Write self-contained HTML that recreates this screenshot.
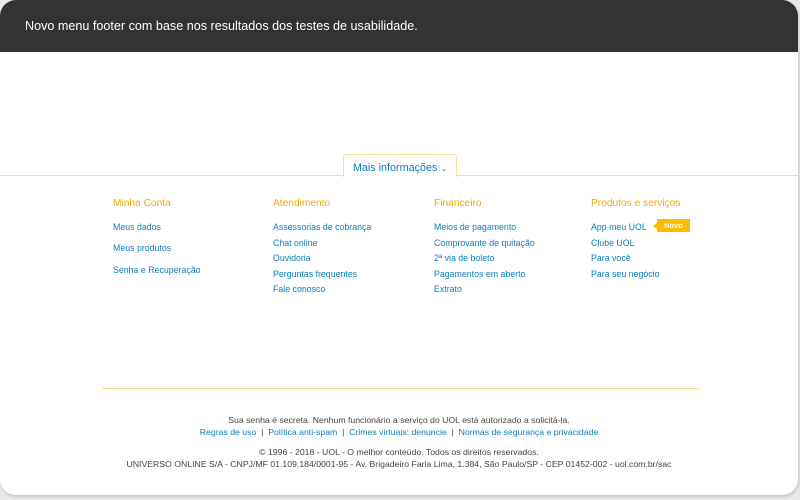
<!DOCTYPE html>
<html><head><meta charset="utf-8"><style>
*{margin:0;padding:0;box-sizing:border-box}
body{width:800px;height:500px;background:#e9e9e9;font-family:"Liberation Sans",sans-serif;position:relative;overflow:hidden}
.card{position:absolute;left:0;top:0;width:798px;height:495px;background:#fff;border-radius:16px;overflow:hidden;box-shadow:1px 2px 3px rgba(0,0,0,.15)}
.hdr{height:52px;background:#333;color:#fff;font-size:12.6px;padding-left:25px;line-height:52px}
.line{position:absolute;left:0;right:0;top:175px;height:1px;background:#f7dd8f}
.tab{position:absolute;left:343px;top:154px;width:114px;height:23px;border:1px solid #f7dd8f;border-bottom:none;border-radius:4px 4px 0 0;background:#fff;color:#0a7fbf;font-size:10.8px;text-align:center;line-height:26px}
.col{position:absolute;top:198px;font-size:8.8px;color:#0a7fbf}
.col h4{color:#f5a800;font-weight:normal;font-size:10.2px;margin-bottom:11px}
.col div{height:15.6px;line-height:15px}
.c1 div{height:21.3px}
.badge{position:absolute;left:657px;top:219px;width:33px;height:13px;background:#fbbc05;color:#fff;font-size:7.5px;text-align:center;line-height:13px;font-weight:bold}
.badge:before{content:"";position:absolute;left:-4px;top:3.5px;border:3px solid transparent;border-right:4px solid #fbbc05;border-left:none}
.hr2{position:absolute;left:102px;width:597px;top:388px;height:1px;background:#f7dd8f}
.ft{position:absolute;left:0;right:0;text-align:center;font-size:8.7px;color:#444}
.ft a{color:#0a7fbf;text-decoration:none}
</style></head><body>
<div class="card">
<div class="hdr">Novo menu footer com base nos resultados dos testes de usabilidade.</div>
<div class="line"></div>
<div class="tab">Mais informações <span style="font-size:8px">&#8964;</span></div>
<div class="col c1" style="left:113px"><h4>Minha Conta</h4><div>Meus dados</div><div>Meus produtos</div><div>Senha e Recuperação</div></div>
<div class="col" style="left:273px"><h4>Atendimento</h4><div>Assessorias de cobrança</div><div>Chat online</div><div>Ouvidoria</div><div>Perguntas frequentes</div><div>Fale conosco</div></div>
<div class="col" style="left:434px"><h4>Financeiro</h4><div>Meios de pagamento</div><div>Comprovante de quitação</div><div>2ª via de boleto</div><div>Pagamentos em aberto</div><div>Extrato</div></div>
<div class="col" style="left:591px"><h4>Produtos e serviços</h4><div>App meu UOL</div><div>Clube UOL</div><div>Para você</div><div>Para seu negócio</div></div>
<div class="badge">Novo</div>
<div class="hr2"></div>
<div class="ft" style="top:415px">Sua senha é secreta. Nenhum funcionário a serviço do UOL está autorizado a solicitá-la.</div>
<div class="ft" style="top:427px"><a>Regras de uso</a> &nbsp;|&nbsp; <a>Política anti-spam</a> &nbsp;|&nbsp; <a>Crimes virtuais: denuncie</a> &nbsp;|&nbsp; <a>Normas de segurança e privacidade</a></div>
<div class="ft" style="top:447px">© 1996 - 2018 - UOL - O melhor conteúdo. Todos os direitos reservados.</div>
<div class="ft" style="top:459px">UNIVERSO ONLINE S/A - CNPJ/MF 01.109.184/0001-95 - Av. Brigadeiro Faria Lima, 1.384, São Paulo/SP - CEP 01452-002 - uol.com.br/sac</div>
</div>
</body></html>
